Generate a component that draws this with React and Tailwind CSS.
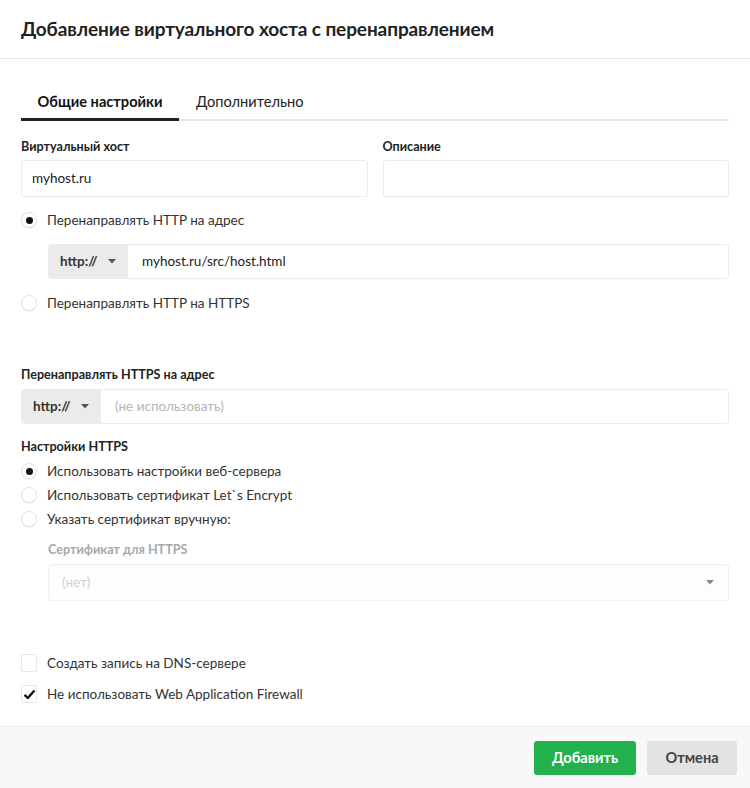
import React from "react";

const font = { fontFamily: "Lato, 'Noto Sans', sans-serif" };

function Radio({ checked, children }) {
  return (
    <label className="flex items-center h-6 gap-[10px] text-[13.5px] text-[#333]">
      <span className="w-4 h-4 rounded-full border border-[#e2e2e2] bg-white shadow-[0_1px_1px_rgba(0,0,0,0.06)] flex items-center justify-center">
        {checked && <span className="w-[7px] h-[7px] rounded-full bg-[#111]" />}
      </span>
      {children}
    </label>
  );
}

function Checkbox({ checked, children }) {
  return (
    <label className="flex items-center h-[18px] gap-[10px] text-[13.5px] text-[#333]">
      <span className="w-4 h-[18px] rounded-[2px] border border-[#e6e6e6] bg-white flex items-center justify-center">
        {checked && (
          <svg width="13" height="11" viewBox="0 0 13 11">
            <path d="M1.5 5.8 L4.8 9 L11.5 1.5" fill="none" stroke="#111" strokeWidth="2.4" strokeLinejoin="round" />
          </svg>
        )}
      </span>
      {children}
    </label>
  );
}

function Caret({ color = "#555" }) {
  return (
    <svg width="8" height="5" viewBox="0 0 8 5">
      <path d="M0 0 H8 L4 4.5 Z" fill={color} />
    </svg>
  );
}

function PrefixInput({ value, placeholder }) {
  return (
    <div className="flex h-[35px] rounded-[3px] border border-[#ececec] overflow-hidden">
      <div className="w-[79px] bg-[#ebebeb] flex items-center pl-[11px] gap-[10px] text-[13.5px] font-bold text-[#333]">
        http://
        <Caret />
      </div>
      <div className="flex-1 bg-white flex items-center pl-[14px] text-[13.5px]">
        {value ? <span className="text-[#222]">{value}</span> : <span className="text-[#b5b5b5]">{placeholder}</span>}
      </div>
    </div>
  );
}

export default function App() {
  return (
    <div className="w-[750px] h-[788px] bg-white flex flex-col" style={font}>
      <div className="h-[59px] flex items-center px-[21px] border-b border-[#e6e6e6]">
        <h1 className="text-[19px] tracking-[-0.1px] font-bold text-[#222]">Добавление виртуального хоста с перенаправлением</h1>
      </div>

      <div className="flex-1 px-[21px]">
        <div className="mt-[24px] flex w-[708px] border-b-2 border-[#e6e6e6] h-[38px]">
          <div className="w-[158px] flex justify-center pt-[8px] border-b-[3px] border-[#222] -mb-[2px] text-[14.6px] font-bold text-[#111]">
            Общие настройки
          </div>
          <div className="pl-[17px] pt-[8px] text-[14.6px] text-[#222]">Дополнительно</div>
        </div>

        <div className="mt-[17px] flex gap-[15px] w-[708px]">
          <div className="flex-1">
            <div className="text-[12.6px] font-bold text-[#222] h-[17px]">Виртуальный хост</div>
            <div className="mt-[5px] h-[37px] border border-[#ececec] rounded-[3px] flex items-center pl-[10px] text-[13.5px] text-[#222]">
              myhost.ru
            </div>
          </div>
          <div className="flex-1">
            <div className="text-[12.6px] font-bold text-[#222] h-[17px]">Описание</div>
            <div className="mt-[5px] h-[37px] border border-[#ececec] rounded-[3px]" />
          </div>
        </div>

        <div className="mt-[11px]">
          <Radio checked>Перенаправлять HTTP на адрес</Radio>
        </div>
        <div className="mt-[12px] ml-[27px] w-[681px]">
          <PrefixInput value="myhost.ru/src/host.html" />
        </div>
        <div className="mt-[12px]">
          <Radio>Перенаправлять HTTP на HTTPS</Radio>
        </div>

        <div className="mt-[51px] text-[12.6px] font-bold text-[#222] h-[17px]">Перенаправлять HTTPS на адрес</div>
        <div className="mt-[6px] w-[708px]">
          <PrefixInput placeholder="(не использовать)" />
        </div>

        <div className="mt-[14px] text-[12.6px] font-bold text-[#222] h-[17px]">Настройки HTTPS</div>
        <div className="mt-[4px] flex flex-col">
          <Radio checked>Использовать настройки веб-сервера</Radio>
          <Radio>Использовать сертификат Let`s Encrypt</Radio>
          <Radio>Указать сертификат вручную:</Radio>
        </div>

        <div className="ml-[27px] w-[681px]">
          <div className="mt-[10px] text-[12.6px] font-bold text-[#a8a8a8] h-[17px]">Сертификат для HTTPS</div>
          <div className="mt-[6px] h-[37px] border border-[#f0f0f0] rounded-[3px] flex items-center justify-between pl-[13px] pr-[14px] bg-[#fdfdfd]">
            <span className="text-[13.5px] text-[#d0d0d0]">(нет)</span>
            <Caret color="#888" />
          </div>
        </div>

        <div className="mt-[53px] flex flex-col gap-[13px]">
          <Checkbox>Создать запись на DNS-сервере</Checkbox>
          <Checkbox checked>Не использовать Web Application Firewall</Checkbox>
        </div>
      </div>

      <div className="h-[62px] bg-[#f8f8f8] border-t border-[#ececec] flex items-center justify-end pr-[13px] gap-[11px]">
        <button className="w-[102px] h-[34px] rounded-[3px] bg-[#22b14c] text-white text-[14.6px] font-bold">Добавить</button>
        <button className="w-[90px] h-[34px] rounded-[3px] bg-[#e3e3e3] text-[#444] text-[14.6px] font-bold">Отмена</button>
      </div>
    </div>
  );
}
